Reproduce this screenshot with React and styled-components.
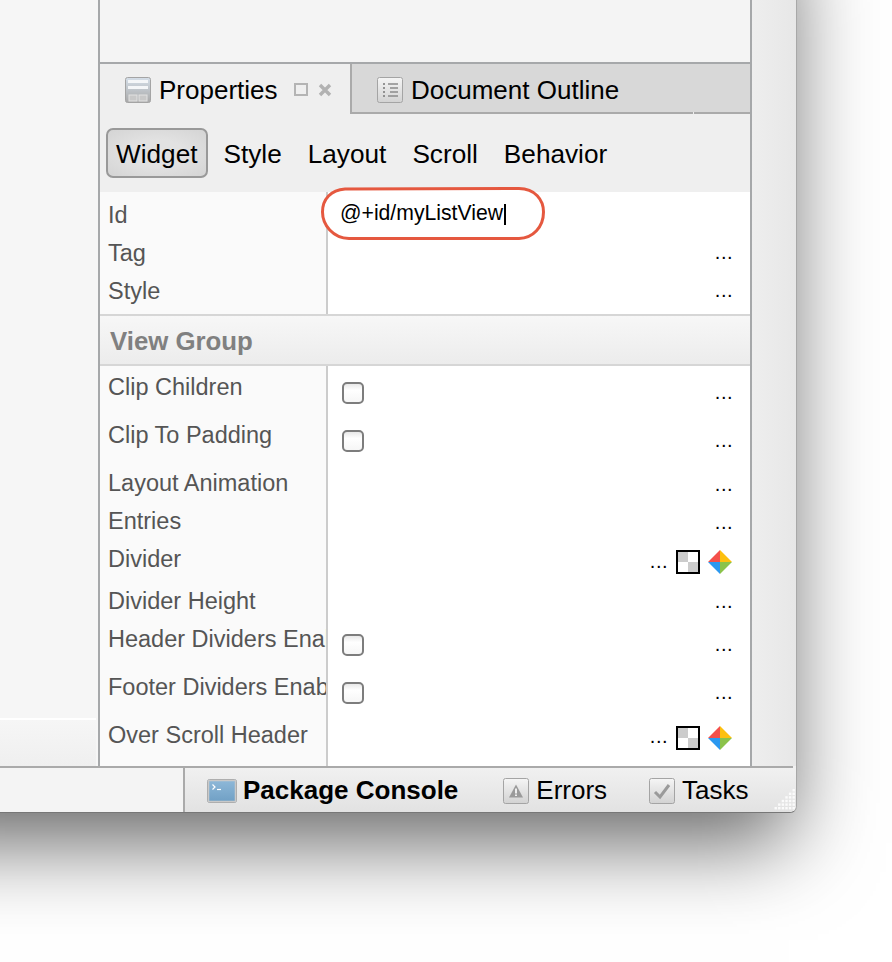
import React from "react";
import styled, { createGlobalStyle } from "styled-components";

const GlobalStyle = createGlobalStyle`
  html, body {
    margin: 0;
    padding: 0;
    width: 892px;
    height: 962px;
    overflow: hidden;
    background: #fff;
  }
  * { box-sizing: border-box; }
`;

const Page = styled.div`
  width: 892px;
  height: 962px;
  overflow: hidden;
  font-family: "Liberation Sans", Arial, sans-serif;
`;

const Window = styled.div`
  display: flex;
  flex-direction: column;
  width: 897px;
  height: 913px;
  margin: -100px 0 0 -100px;
  background: #f4f4f4;
  border-right: 1px solid #a8a8a8;
  border-bottom: 1px solid #777;
  border-bottom-right-radius: 7px;
  box-shadow: 0 38px 80px -8px rgba(0, 0, 0, 0.6);
`;

const Main = styled.div`
  display: flex;
  flex: 1;
  min-height: 0;
`;

const LeftPane = styled.div`
  display: flex;
  flex-direction: column;
  justify-content: flex-end;
  width: 198px;
  background: #f6f6f6;
`;

const LeftFooter = styled.div`
  height: 48px;
  margin-right: 2px;
  border-top: 2px solid #fff;
  background: linear-gradient(#f6f6f6, #efefef);
`;

const Center = styled.div`
  display: flex;
  flex-direction: column;
  width: 654px;
  border-left: 2px solid #a6a8aa;
  border-right: 2px solid #a6a8aa;
`;

const TopBlank = styled.div`
  height: 164px;
  flex: none;
  background: #f4f4f4;
  border-bottom: 2px solid #a6a8aa;
`;

const TabBar = styled.div`
  display: flex;
  height: 50px;
  flex: none;
`;

const ActiveTab = styled.div`
  display: flex;
  align-items: center;
  gap: 8px;
  width: 252px;
  padding: 2px 0 0 25px;
  background: #efefef;
  border-right: 2px solid #aaa;
  font-size: 26px;
  color: #000;
`;

const InactiveTab = styled.div`
  display: flex;
  align-items: center;
  gap: 8px;
  width: 341px;
  padding: 4px 0 0 25px;
  background: #d8d8d8;
  border-bottom: 2px solid #aaa;
  font-size: 26px;
  color: #000;
`;

const TabFiller = styled.div`
  position: relative;
  flex: 1;
  background: #d8d8d8;
  border-bottom: 2px solid #aaa;
  &::before {
    content: "";
    position: absolute;
    left: 0;
    bottom: -2px;
    width: 1px;
    height: 2px;
    background: #eee;
  }
`;

const TabActions = styled.div`
  display: flex;
  align-items: center;
  gap: 10px;
  margin-left: 8px;
`;

const Toolbar = styled.div`
  display: flex;
  flex: none;
  gap: 6px;
  height: 78px;
  padding: 14px 0 0 6px;
  background: #efefef;
`;

const ToolButton = styled.div`
  height: 50px;
  padding: 0 8px;
  line-height: 48px;
  font-size: 26.2px;
  color: #000;
  border-radius: 7px;
  border: 2px solid ${(p) => (p.$active ? "#999" : "transparent")};
  background: ${(p) =>
    p.$active ? "radial-gradient(ellipse at center, #e2e2e2 40%, #d4d4d4 100%)" : "none"};
`;

const Section = styled.div`
  position: relative;
  flex: none;
`;

const Row = styled.div`
  display: grid;
  grid-template-columns: 228px 1fr;
  height: ${(p) => p.$height}px;
  & > * { padding-top: ${(p) => p.$top || 0}px; }
`;

const Label = styled.div`
  overflow: hidden;
  padding-left: 8px;
  background: #fafafa;
  border-right: 2px solid #ccc;
  line-height: 38px;
  font-size: 23.5px;
  color: #555;
  white-space: nowrap;
`;

const Value = styled.div`
  display: flex;
  align-items: flex-start;
  justify-content: flex-end;
  gap: 8px;
  padding-right: 17px;
  background: #fff;
`;

const CheckCell = styled.div`
  flex: 1;
  padding: 14px 0 0 14px;
`;

const Checkbox = styled.div`
  width: 22px;
  height: 22px;
  border: 2px solid #7d7d7d;
  border-radius: 5px;
  background: linear-gradient(#e9e9e9, #fff 35%, #f6f6f6);
`;

const Dots = styled.span`
  margin-top: ${(p) => p.$offset}px;
  line-height: 18px;
  font-size: 20px;
  letter-spacing: 0.5px;
  color: #000;
`;

const Swatch = styled.div`
  width: 24px;
  height: 24px;
  margin-top: 10px;
  border: 2px solid #000;
  background: conic-gradient(#fff 25%, #ccc 0 50%, #fff 0 75%, #ccc 0);
`;

const ColorWheel = styled.svg`
  display: block;
  width: 24px;
  height: 24px;
  margin: 10px 1px 0 0;
`;

const IdText = styled.div`
  position: relative;
  flex: 1;
  padding: 4px 0 0 12px;
  line-height: 26px;
  font-size: 21.2px;
  color: #000;
`;

const Caret = styled.span`
  display: inline-block;
  width: 2px;
  height: 21px;
  margin-left: 1px;
  vertical-align: -5px;
  background: #000;
`;

const Annotation = styled.svg`
  position: absolute;
  left: 221px;
  top: -5px;
  width: 224px;
  height: 53px;
  overflow: visible;
`;

const GroupHeader = styled.div`
  flex: none;
  height: 52px;
  padding-left: 10px;
  line-height: 50px;
  font-size: 25.8px;
  font-weight: bold;
  color: #808080;
  background: linear-gradient(#f7f7f7, #ececec);
  border-top: 2px solid #d6d6d6;
  border-bottom: 2px solid #d6d6d6;
`;

const Gutter = styled.div`
  flex: 1;
  background: linear-gradient(to right, #eeeeee, #e7e7e7);
`;

const StatusBar = styled.div`
  position: relative;
  display: flex;
  flex: none;
  height: 46px;
  background: linear-gradient(#f1f1f1, #e2e2e2);
  border-bottom-right-radius: 7px;
  &::before {
    content: "";
    position: absolute;
    left: 0;
    right: 3px;
    top: 0;
    height: 2px;
    background: #aaa;
  }
`;

const StatusLeft = styled.div`
  width: 285px;
  background: #f4f4f4;
  border-right: 2px solid #aaa;
`;

const StatusItems = styled.div`
  display: flex;
  align-items: center;
  padding: 3px 0 0 22px;
`;

const StatusItem = styled.div`
  display: flex;
  align-items: center;
  gap: ${(p) => p.$gap}px;
  margin-right: ${(p) => p.$after}px;
  font-size: 26px;
  font-weight: ${(p) => (p.$bold ? "bold" : "normal")};
  color: #000;
`;

const Grip = styled.svg`
  position: absolute;
  right: 0;
  bottom: 1px;
  width: 22px;
  height: 23px;
`;

const Frame = ({ id, children, w = 26, h = 26, from = "#f5f5f5", to = "#d2d2d2" }) => (
  <svg width={w} height={h} viewBox={`0 0 ${w} ${h}`} style={{ display: "block", flex: "none" }}>
    <defs>
      <linearGradient id={id} x1="0" y1="0" x2="0" y2="1">
        <stop offset="0" stopColor={from} />
        <stop offset="1" stopColor={to} />
      </linearGradient>
    </defs>
    <rect x="0.5" y="0.5" width={w - 1} height={h - 1} rx="2" fill={`url(#${id})`} stroke="#a4a4a4" />
    {children}
  </svg>
);

const PropertiesIcon = () => (
  <Frame id="prop" from="#d5dfe9" to="#a8a8a8">
    <rect x="3" y="3" width="20" height="3" fill="#f4f6f8" />
    <rect x="3" y="9" width="20" height="3" fill="#f4f6f8" />
    <rect x="4" y="18" width="8" height="6" fill="#c8c8c8" stroke="#e2e2e2" />
    <rect x="14" y="18" width="8" height="6" fill="#c8c8c8" stroke="#e2e2e2" />
  </Frame>
);

const OutlineIcon = () => (
  <Frame id="outline">
    <path d="M6 7h2M6 11h2M6 15h2M6 19h2" stroke="#777" strokeWidth="1.5" />
    <path d="M11 7h10M13 11h8M13 15h8M11 19h10" stroke="#8a8a8a" strokeWidth="1.5" />
  </Frame>
);

const ConsoleIcon = () => (
  <Frame id="console" w={30} h={24} from="#8fb9d9" to="#6f9fc4">
    <rect x="1.5" y="1.5" width="27" height="21" fill="none" stroke="#c9c9c9" strokeWidth="1.5" />
    <path d="M5.5 5.5l2.5 2.5-2.5 2.5" fill="none" stroke="#fff" strokeWidth="1.2" />
    <path d="M10 10.5h4" stroke="#fff" strokeWidth="1.2" />
  </Frame>
);

const ErrorsIcon = () => (
  <Frame id="errors">
    <path d="M13 6.5L20 19.5H6Z" fill="#9a9a9a" />
    <path d="M13 10.5v5M13 16.5v1.6" stroke="#eee" strokeWidth="2" />
  </Frame>
);

const TasksIcon = () => (
  <Frame id="tasks">
    <path d="M6 14l5 5 9-12" fill="none" stroke="#9a9a9a" strokeWidth="3" />
  </Frame>
);

const MaximizeGlyph = () => (
  <svg width="14" height="14" viewBox="0 0 14 14" style={{ display: "block" }}>
    <rect x="1" y="1" width="12" height="11" fill="#efefef" stroke="#b4b4b4" strokeWidth="2" />
  </svg>
);

const CloseGlyph = () => (
  <svg width="14" height="14" viewBox="0 0 14 14" style={{ display: "block" }}>
    <path d="M2 2l10 10M12 2L2 12" stroke="#b2b2b2" strokeWidth="3.4" />
  </svg>
);

const Wheel = () => (
  <ColorWheel viewBox="0 0 24 24">
    <path d="M12 0L0 12h12Z" fill="#f4504a" />
    <path d="M12 0l12 12H12Z" fill="#fdc00f" />
    <path d="M0 12l12 12V12Z" fill="#2b98f0" />
    <path d="M24 12L12 24V12Z" fill="#8bc34a" />
  </ColorWheel>
);

const gripDots = [];
for (let r = 0; r < 6; r++) {
  for (let c = 5 - r; c < 6; c++) {
    gripDots.push(<rect key={`${r}-${c}`} x={c * 3.6 + 0.5} y={r * 3.6 + 1} width="2.4" height="2.4" fill="#fbfbfb" />);
  }
}

const groupRows = [
  { label: "Clip Children", height: 50, top: 2, check: true, dots: 15 },
  { label: "Clip To Padding", height: 48, check: true, dots: 15 },
  { label: "Layout Animation", height: 38, dots: 11 },
  { label: "Entries", height: 38, dots: 11 },
  { label: "Divider", height: 42, dots: 12, color: true },
  { label: "Divider Height", height: 38, dots: 10 },
  { label: "Header Dividers Enabled", height: 48, check: true, dots: 15 },
  { label: "Footer Dividers Enabled", height: 48, check: true, dots: 15 },
  { label: "Over Scroll Header", height: 50, dots: 11, color: true },
];

export default function App() {
  return (
    <Page>
      <GlobalStyle />
      <Window>
        <Main>
          <LeftPane>
            <LeftFooter />
          </LeftPane>
          <Center>
            <TopBlank />
            <TabBar>
              <ActiveTab>
                <PropertiesIcon />
                Properties
                <TabActions>
                  <MaximizeGlyph />
                  <CloseGlyph />
                </TabActions>
              </ActiveTab>
              <InactiveTab>
                <OutlineIcon />
                Document Outline
              </InactiveTab>
              <TabFiller />
            </TabBar>
            <Toolbar>
              <ToolButton $active>Widget</ToolButton>
              <ToolButton>Style</ToolButton>
              <ToolButton>Layout</ToolButton>
              <ToolButton>Scroll</ToolButton>
              <ToolButton>Behavior</ToolButton>
            </Toolbar>
            <Section>
              <Annotation viewBox="0 0 224 53">
                <path
                  d="M24 2L198 1.5C214 1.5 222.5 13 222.5 25C222.5 40 212 51 198 51.5L28 51.5C12 51 1.5 38 1.5 25C1.5 12 10 3 24 2Z"
                  fill="#fff"
                  stroke="#e5583f"
                  strokeWidth="3"
                />
              </Annotation>
              <Row $height={42} $top={4}>
                <Label>Id</Label>
                <Value>
                  <IdText>
                    @+id/myListView
                    <Caret />
                  </IdText>
                </Value>
              </Row>
              <Row $height={38}>
                <Label>Tag</Label>
                <Value>
                  <Dots $offset={9}>...</Dots>
                </Value>
              </Row>
              <Row $height={42}>
                <Label>Style</Label>
                <Value>
                  <Dots $offset={9}>...</Dots>
                </Value>
              </Row>
            </Section>
            <GroupHeader>View Group</GroupHeader>
            <Section>
              {groupRows.map((row) => (
                <Row key={row.label} $height={row.height} $top={row.top}>
                  <Label>{row.label}</Label>
                  <Value>
                    {row.check && (
                      <CheckCell>
                        <Checkbox />
                      </CheckCell>
                    )}
                    <Dots $offset={row.dots}>...</Dots>
                    {row.color && <Swatch />}
                    {row.color && <Wheel />}
                  </Value>
                </Row>
              ))}
            </Section>
          </Center>
          <Gutter />
        </Main>
        <StatusBar>
          <StatusLeft />
          <StatusItems>
            <StatusItem $bold $gap={6} $after={45}>
              <ConsoleIcon />
              Package Console
            </StatusItem>
            <StatusItem $gap={7} $after={42}>
              <ErrorsIcon />
              Errors
            </StatusItem>
            <StatusItem $gap={7} $after={0}>
              <TasksIcon />
              Tasks
            </StatusItem>
          </StatusItems>
          <Grip viewBox="0 0 22 23">{gripDots}</Grip>
        </StatusBar>
      </Window>
    </Page>
  );
}
